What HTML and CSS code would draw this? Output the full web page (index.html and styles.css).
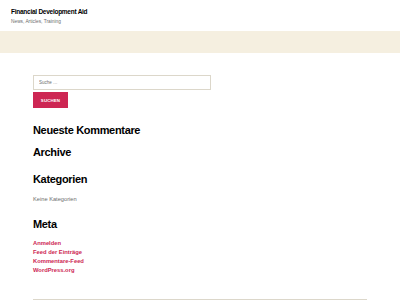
FILE: index.html
```html
<!DOCTYPE html>
<html lang="de">
<head>
  <meta charset="UTF-8">
  <title>Financial Development Aid</title>
  <link rel="stylesheet" href="styles.css">
</head>
<body>

<!-- Header -->
<div class="site-header">
  <div class="site-title">Financial Development Aid</div>
  <div class="site-description">News, Articles, Training</div>
</div>
<div class="header-band"></div>

<!-- Widgets -->
<div class="widgets">
  <form class="search-form">
    <input class="search-field" type="search" placeholder="Suche …">
    <button class="search-submit" type="button">Suchen</button>
  </form>

  <h2 class="widget-title">Neueste Kommentare</h2>
  <h2 class="widget-title title-archive">Archive</h2>

  <h2 class="widget-title title-categories">Kategorien</h2>
  <p class="widget-text">Keine Kategorien</p>

  <h2 class="widget-title">Meta</h2>
  <ul class="meta-links">
    <li><a href="#">Anmelden</a></li>
    <li><a href="#">Feed der Einträge</a></li>
    <li><a href="#">Kommentare-Feed</a></li>
    <li><a href="#">WordPress.org</a></li>
  </ul>

  <hr class="footer-line">
</div>

</body>
</html>
```

FILE: styles.css
```css
body {
  margin: 0;
  font-family: "Liberation Sans", Arial, sans-serif;
  background-color: #fff;
  color: #000;
}
.site-header {
  height: 31px;
  padding: 8px 11px 0;
  box-sizing: border-box;
}
.site-title {
  font-size: 6.5px;
  font-weight: 700;
  letter-spacing: -0.04em;
  line-height: 8px;
  color: #000;
}
.site-description {
  font-size: 4.8px;
  color: #6d6d6d;
  margin-top: 3px;
}
.header-band {
  height: 22px;
  background-color: #f5efe0;
}
.widgets {
  padding: 22px 33px 0;
}
.search-form {
  margin: 0;
}
.search-field {
  display: block;
  width: 178px;
  height: 15px;
  box-sizing: border-box;
  border: 1px solid #dcd7ca;
  padding: 0 5px;
  font-family: inherit;
  font-size: 4.5px;
  outline: none;
}
.search-field::placeholder {
  color: #6d6d6d;
}
.search-submit {
  display: block;
  margin-top: 2px;
  width: 35px;
  height: 16px;
  padding: 0;
  border: none;
  background-color: #cd2653;
  color: #fff;
  font-family: inherit;
  font-size: 4.4px;
  font-weight: 700;
  letter-spacing: 0.03em;
  text-transform: uppercase;
}
.widget-title {
  font-size: 11px;
  font-weight: 700;
  letter-spacing: -0.03em;
  line-height: 12px;
  margin: 16px 0 0;
}
.title-archive {
  margin-top: 10px;
}
.title-categories {
  margin-top: 15px;
}
.widget-text {
  font-size: 5.7px;
  line-height: 6px;
  color: #6d6d6d;
  margin: 11px 0 16px;
}
.meta-links {
  list-style: none;
  margin: 9px 0 0;
  padding: 0;
}
.meta-links li {
  font-size: 5.8px;
  font-weight: 700;
  line-height: 9px;
}
.meta-links a {
  color: #cd2653;
  text-decoration: none;
}
.footer-line {
  border: none;
  border-top: 1px solid #dcd7ca;
  margin: 24px 0 0;
}
```
